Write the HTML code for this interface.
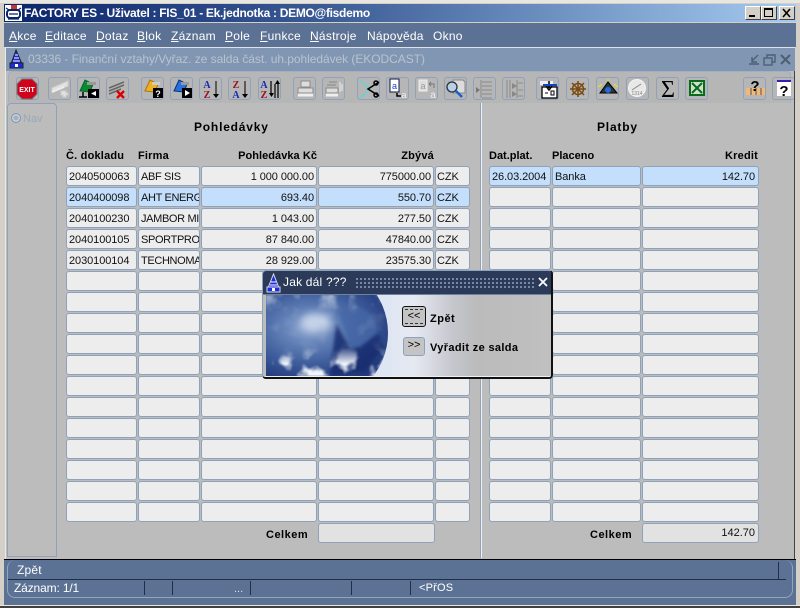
<!DOCTYPE html>
<html><head><meta charset="utf-8">
<style>
*{box-sizing:border-box}
html,body{margin:0;padding:0;background:#d4d0c8;overflow:hidden}
#r{position:relative;width:800px;height:608px;overflow:hidden;font-family:"Liberation Sans",sans-serif;font-size:11px;color:#000;background:#d4d0c8}
.a,#r>div{position:absolute}
.m{position:absolute;top:29px;color:#fff;font-size:12px;letter-spacing:.25px}
.m u{text-decoration:underline}
.g{display:grid;row-gap:1px;column-gap:1px;grid-auto-rows:20px}
.g i{display:block;height:20px;background:#ededed;border:1px solid #8ea3bb;border-radius:3px;font-style:normal;padding:3px 2px 0 2px;line-height:14px;font-size:11px;letter-spacing:-.08px;white-space:nowrap;overflow:hidden;color:#111}
.g i.h{background:#c3dffb}
.g i.t{text-align:right}
.g.p i{padding-right:3px}
.g.q i:nth-child(5n+2){letter-spacing:-.35px;padding-right:0}
.g.q i:nth-child(5n){padding-left:1px}
.f{position:absolute;background:#e2e2e2;border:1px solid #8ea3bb;border-radius:3px;height:20px;line-height:19px;text-align:right;padding-right:3px;color:#111}
.l{position:absolute;font-weight:bold;font-size:11px;line-height:13px;white-space:nowrap;color:#000;letter-spacing:.2px}
.b{position:absolute;top:77px;width:23px;height:23px;border:1px solid #8ea3bb;border-radius:3px}
</style></head><body>
<div id="r">

<!-- outer window -->
<div style="left:0;top:0;width:800px;height:3px;background:#e8e6e0"></div>
<div style="left:4px;top:4px;width:792px;height:18px;background:linear-gradient(90deg,#0a246a 0%,#3a5a94 40%,#a6caf0 100%)"></div>
<div style="left:24px;top:5px;color:#fff;font-weight:bold;font-size:12px;line-height:16px;white-space:nowrap;letter-spacing:-.3px">FACTORY ES - Uživatel : FIS_01 - Ek.jednotka : DEMO@fisdemo</div>
<svg class="a" style="left:5px;top:5px" width="18" height="17" viewBox="0 0 18 17"><rect width="17" height="16" fill="#fff"/><rect x="6" y="0" width="6" height="4" fill="#c33"/><rect x="2" y="5" width="13" height="8" rx="3" fill="none" stroke="#0a246a" stroke-width="2"/><path d="M4 9h9M3 14h11M1 3l3 2M16 3l-3 2" stroke="#0a246a" stroke-width="1.2"/></svg>
<div style="left:745px;top:6px;width:16px;height:14px;background:#d4d0c8;border:1px solid;border-color:#fff #404040 #404040 #fff"><div class="a" style="left:3px;top:8px;width:6px;height:2px;background:#000"></div></div>
<div style="left:761px;top:6px;width:16px;height:14px;background:#d4d0c8;border:1px solid;border-color:#fff #404040 #404040 #fff"><div class="a" style="left:2px;top:1px;width:9px;height:9px;border:1px solid #000;border-top-width:2px"></div></div>
<div style="left:779px;top:6px;width:16px;height:14px;background:#d4d0c8;border:1px solid;border-color:#fff #404040 #404040 #fff"><svg class="a" style="left:2px;top:1px" width="10" height="10"><path d="M1 1l7 8M8 1l-7 8" stroke="#000" stroke-width="1.6"/></svg></div>

<!-- menu -->
<div style="left:4px;top:23px;width:792px;height:24px;background:#5c7294;"></div>
<div style="left:4px;top:22px;width:792px;height:1px;background:#d4d0c8"></div>
<span class="m" style="left:9px"><u>A</u>kce</span>
<span class="m" style="left:45px"><u>E</u>ditace</span>
<span class="m" style="left:96px"><u>D</u>otaz</span>
<span class="m" style="left:137px"><u>B</u>lok</span>
<span class="m" style="left:171px"><u>Z</u>áznam</span>
<span class="m" style="left:225px"><u>P</u>ole</span>
<span class="m" style="left:260px"><u>F</u>unkce</span>
<span class="m" style="left:310px"><u>N</u>ástroje</span>
<span class="m" style="left:367px">Nápo<u>v</u>ěda</span>
<span class="m" style="left:433px">Okno</span>

<!-- MDI window -->
<div style="left:5px;top:47px;width:790px;height:513px;background:#bcbcbc;border-left:1px solid #e8e8e8"></div>
<div style="left:6px;top:47px;width:789px;height:1px;background:#dfe3e8"></div>
<div style="left:6px;top:48px;width:789px;height:23px;background:#8096b2"></div>
<div style="left:28px;top:51px;color:#b9c3cf;font-size:12px;line-height:16px;white-space:nowrap;letter-spacing:-.05px">03336 - Finanční vztahy/Vyřaz. ze salda část. uh.pohledávek (EKODCAST)</div>
<svg class="a" style="left:8px;top:49px" width="17" height="20" viewBox="0 0 17 20"><path d="M8 1L3 15h11z" fill="#1a2ee0" stroke="#222"/><rect x="2" y="14" width="13" height="5" fill="#1a2ee0" stroke="#222"/><path d="M6 9h5M5 12h7M7 6h3" stroke="#fff"/><rect x="7" y="15" width="3" height="3" fill="#fff"/></svg>
<svg class="a" style="left:745px;top:52px" width="50" height="15" viewBox="0 0 50 15" fill="none" stroke="#4e5f74" stroke-width="1.4"><path d="M4 12h10M13 3L7 9M7 5v5h5"/><rect x="19" y="6" width="8" height="7"/><path d="M22 6V3h8v7h-3" /><path d="M36 3l9 9M45 3l-9 9" stroke-width="2"/></svg>

<!-- toolbar -->
<div style="left:8px;top:71px;width:783px;height:32px;background:#b6b6b6;border-top:1px solid #9db0c5;border-left:1px solid #9db0c5;border-right:1px solid #9db0c5;border-radius:4px 4px 0 0"></div>
<div class="b" style="left:16px"></div><div class="b" style="left:48px"></div><div class="b" style="left:77px"></div><div class="b" style="left:106px"></div><div class="b" style="left:141px"></div><div class="b" style="left:170px"></div><div class="b" style="left:199px"></div><div class="b" style="left:228px"></div><div class="b" style="left:258px"></div><div class="b" style="left:293px"></div><div class="b" style="left:322px"></div><div class="b" style="left:357px"></div><div class="b" style="left:386px"></div><div class="b" style="left:415px"></div><div class="b" style="left:444px"></div><div class="b" style="left:473px"></div><div class="b" style="left:502px"></div><div class="b" style="left:536px"></div><div class="b" style="left:566px"></div><div class="b" style="left:596px"></div><div class="b" style="left:626px"></div><div class="b" style="left:656px"></div><div class="b" style="left:685px"></div><div class="b" style="left:743px"></div><div class="b" style="left:772px"></div>

<svg class="a" style="left:0;top:70px" width="800" height="36" viewBox="0 70 800 36" font-family="Liberation Sans,sans-serif" font-weight="bold">
<!-- exit -->
<path d="M22 79h10l5 5v10l-5 5H22l-5-5V84z" fill="#d0021b" stroke="#777"/>
<text x="27" y="92" text-anchor="middle" font-size="7" fill="#fff">EXIT</text>
<!-- grey insert -->
<path d="M52 88l16-7v5l-16 6zM61 91h5v2h2v2h-2v2h-3v-2h-2z" fill="#e2e2e2" stroke="#cfcfcf"/><path d="M52 92l12-5" stroke="#eee" stroke-width="2"/>
<!-- green -->
<path d="M80 91l5-11 8 4-3 8z" fill="#0a8a2a" stroke="#063"/><path d="M87 82h9v3h-9z" fill="#999"/><rect x="88" y="89" width="11" height="9" fill="#000"/><path d="M96 91l-5 2.500 5 2.500z" fill="#fff"/><path d="M79 97h8M83 92v5" stroke="#000" stroke-width="1.500"/>
<!-- del -->
<path d="M109 88l15-6M109 91l15-6M109 94l12-5" stroke="#666" stroke-width="1.500"/><path d="M117 91l7 7M124 91l-7 7" stroke="#d00" stroke-width="2.400"/>
<!-- yellow query -->
<path d="M145 91l5-11 8 4-3 8z" fill="#f0b020" stroke="#a70"/><path d="M152 82h8v3h-8z" fill="#ccc"/><rect x="153" y="88" width="10" height="10" fill="#000"/><text x="158" y="97" text-anchor="middle" font-size="9" fill="#fff">?</text>
<!-- blue -->
<path d="M174 91l5-11 8 4-3 8z" fill="#2a70e0" stroke="#037"/><path d="M181 82h8v3h-8z" fill="#999"/><rect x="182" y="88" width="10" height="10" fill="#000"/><path d="M185 90l5 3-5 3z" fill="#fff"/>
<!-- sort -->
<g font-family="Liberation Serif,serif">
<text x="207" y="88" text-anchor="middle" font-size="10" fill="#1a2ab0">A</text><text x="207" y="98" text-anchor="middle" font-size="10" fill="#9a1020">Z</text><path d="M216 81v14" stroke="#000"/><path d="M213 94h6l-3 4z" fill="#000"/>
<text x="236" y="88" text-anchor="middle" font-size="10" fill="#9a1020">Z</text><text x="236" y="98" text-anchor="middle" font-size="10" fill="#1a2ab0">A</text><path d="M245 81v14" stroke="#000"/><path d="M242 94h6l-3 4z" fill="#000"/>
<text x="264" y="88" text-anchor="middle" font-size="10" fill="#1a2ab0">A</text><text x="264" y="98" text-anchor="middle" font-size="10" fill="#9a1020">Z</text>
</g>
<path d="M271 81v14M275 84v14M278 84v14" stroke="#000" stroke-width="1.200"/><path d="M269 93h5l-2.500 4zM275 84h5l-2.500-4z" fill="#000"/>
<!-- print -->
<path d="M301 81h9v6h-9zM298 88h15v5h-15z" fill="#ddd" stroke="#8a8a8a"/><path d="M298 95h15" stroke="#eee" stroke-width="3"/>
<path d="M329 82h8M327 85h9M326 88h12v5h-12z" fill="#ddd" stroke="#888"/><path d="M326 95h12" stroke="#eee" stroke-width="3"/><path d="M340 82v10M342 84v7" stroke="#eee"/>
<!-- scissors -->
<path d="M360 80l10 9-10 9" fill="none" stroke="#7cc" stroke-width="2"/><path d="M379 82l-11 7 11 7" fill="none" stroke="#000" stroke-width="1.500"/><circle cx="376" cy="83" r="2" fill="none" stroke="#000" stroke-width="1.500"/><circle cx="376" cy="95" r="2" fill="none" stroke="#000" stroke-width="1.500"/>
<!-- copy -->
<rect x="390" y="79" width="9" height="13" fill="#fff" stroke="#114"/><text x="394.500" y="89" font-size="9" text-anchor="middle" fill="#14c" font-weight="normal">a</text><path d="M397 93v3h4" stroke="#000" stroke-width="1.500" fill="none"/><text x="404" y="98" font-size="9" text-anchor="middle" fill="#eee" font-weight="normal">a</text>
<!-- grey a<-a -->
<rect x="419" y="80" width="8" height="11" fill="#ddd" stroke="#eee"/><text x="423" y="89" font-size="9" text-anchor="middle" fill="#999" font-weight="normal">a</text><path d="M429 84h5v4M429 84l2-2M429 84l2 2" stroke="#777" fill="none"/><text x="433" y="98" font-size="10" text-anchor="middle" fill="#eee" font-weight="normal">a</text>
<!-- magnifier -->
<path d="M453 80h10l2 2v11h-12z" fill="#dcdcdc" stroke="#888"/><circle cx="452" cy="87" r="5" fill="#bcd0e4" stroke="#234" stroke-width="1.300"/><path d="M456 91l6 6" stroke="#1a5fd0" stroke-width="2.500"/>
<!-- lines -->
<path d="M481 80v18M482 82h10M482 86h10M482 90h10M482 94h10M482 98h10" stroke="#8a8a8a"/><path d="M476 87l4 3-4 3z" fill="#777"/>
<path d="M507 80v18M510 80v18M517 80v18M518 83h5M518 90h5M518 96h5" stroke="#8a8a8a"/><path d="M512 83l5 3-5 3zM512 91l5 3-5 3z" fill="#888"/>
<!-- form -->
<rect x="542" y="87" width="15" height="11" fill="#fff" stroke="#000" stroke-width="1.300"/><rect x="540" y="81" width="13" height="4" fill="#eee"/><path d="M549 81v7M546 86l3 4 3-4" stroke="#000" fill="none" stroke-width="1.500"/><path d="M543 85h14" stroke="#14c" stroke-width="2"/><path d="M545 93h3M551 91h3v4h-3z" stroke="#000" fill="none"/>
<!-- wheel -->
<g stroke="#7a4a10" stroke-width="1.500" fill="none"><circle cx="578" cy="89" r="5.500"/><path d="M570 89h16M578 81v16M572 83l12 12M584 83l-12 12"/></g>
<!-- triangle -->
<path d="M600 93l8-11 9 11z" fill="#333" stroke="#000"/><path d="M598 87l4-3M618 87l-4-3M608 79v2" stroke="#ee0"/><circle cx="608" cy="90" r="3" fill="#1a6fe0"/>
<!-- disk -->
<circle cx="637" cy="88" r="8.500" fill="#e8e8e8" stroke="#f4f4f4"/><path d="M632 90l9-6" stroke="#888"/><text x="637" y="95" font-size="5" text-anchor="middle" fill="#888" font-weight="normal">1314</text>
<!-- sigma -->
<text x="668" y="97" font-size="24" text-anchor="middle" fill="#000" font-family="Liberation Serif,serif" font-weight="normal">Σ</text>
<!-- excel -->
<rect x="690" y="81" width="14" height="14" fill="#cfe0cf" stroke="#0a6a1a" stroke-width="2"/><path d="M692 83l10 10M702 83l-10 10" stroke="#0a6a1a" stroke-width="2"/>
<!-- help -->
<path d="M746 88h19v7h-19z" fill="#f2b877"/><path d="M751 88v7M756 88v7M761 88v7" stroke="#555"/>
<text x="755" y="91" font-size="15" text-anchor="middle" fill="#000">?</text>
<rect x="777" y="81" width="14" height="15" fill="#fff"/><rect x="777" y="80" width="14" height="2" fill="#3a1ab0"/>
<text x="784" y="96" font-size="15" text-anchor="middle" fill="#000">?</text>
</svg>

<!-- nav -->
<div style="left:7px;top:103px;width:50px;height:454px;border:1px solid #8ea3bb;border-radius:4px 4px 0 0;background:#bcbcbc"></div>
<div style="left:11px;top:113px;width:10px;height:10px;border-radius:50%;background:#9fb0c4;border:1px solid #8296ae;box-shadow:inset 0 0 0 1.500px #c8d0d8"></div>
<div style="left:23px;top:113px;color:#9aa8b8;font-size:11px;line-height:13px">Nav</div>
<div style="left:481px;top:103px;width:1px;height:455px;background:#f0f0f0"></div>
<div style="left:480px;top:103px;width:1px;height:455px;background:#8ea3bb"></div>
<div style="left:794px;top:71px;width:1px;height:488px;background:#444"></div>

<!-- headings -->
<div class="l" style="left:194px;top:120px;font-size:12px;line-height:15px;letter-spacing:.8px">Pohledávky</div>
<div class="l" style="left:597px;top:120px;font-size:12px;line-height:15px;letter-spacing:.8px">Platby</div>
<div class="l" style="left:66px;top:150px">Č. dokladu</div>
<div class="l" style="left:138px;top:150px">Firma</div>
<div class="l" style="left:202px;top:150px;width:115px;text-align:right;letter-spacing:.05px">Pohledávka Kč</div>
<div class="l" style="left:319px;top:150px;width:115px;text-align:right">Zbývá</div>
<div class="l" style="left:489px;top:150px;letter-spacing:0">Dat.plat.</div>
<div class="l" style="left:552px;top:150px;letter-spacing:0">Placeno</div>
<div class="l" style="left:643px;top:150px;width:115px;text-align:right">Kredit</div>

<!-- left grid -->
<div class="g q" style="left:66px;top:166px;width:404px;grid-template-columns:71px 62px 116px 116px 35px">
<i>2040500063</i><i>ABF SIS</i><i class="t">1 000 000.00</i><i class="t">775000.00</i><i>CZK</i>
<i class="h">2040400098</i><i class="h">AHT ENERG</i><i class="h t">693.40</i><i class="h t">550.70</i><i class="h">CZK</i>
<i>2040100230</i><i>JAMBOR MI(</i><i class="t">1 043.00</i><i class="t">277.50</i><i>CZK</i>
<i>2040100105</i><i>SPORTPROF</i><i class="t">87 840.00</i><i class="t">47840.00</i><i>CZK</i>
<i>2030100104</i><i>TECHNOMAT</i><i class="t">28 929.00</i><i class="t">23575.30</i><i>CZK</i>
<i></i><i></i><i></i><i></i><i></i>
<i></i><i></i><i></i><i></i><i></i>
<i></i><i></i><i></i><i></i><i></i>
<i></i><i></i><i></i><i></i><i></i>
<i></i><i></i><i></i><i></i><i></i>
<i></i><i></i><i></i><i></i><i></i>
<i></i><i></i><i></i><i></i><i></i>
<i></i><i></i><i></i><i></i><i></i>
<i></i><i></i><i></i><i></i><i></i>
<i></i><i></i><i></i><i></i><i></i>
<i></i><i></i><i></i><i></i><i></i>
<i></i><i></i><i></i><i></i><i></i>
</div>

<!-- right grid -->
<div class="g p" style="left:489px;top:166px;width:270px;grid-template-columns:62px 89px 117px">
<i class="h">26.03.2004</i><i class="h">Banka</i><i class="h t">142.70</i>
<i></i><i></i><i></i>
<i></i><i></i><i></i>
<i></i><i></i><i></i>
<i></i><i></i><i></i>
<i></i><i></i><i></i>
<i></i><i></i><i></i>
<i></i><i></i><i></i>
<i></i><i></i><i></i>
<i></i><i></i><i></i>
<i></i><i></i><i></i>
<i></i><i></i><i></i>
<i></i><i></i><i></i>
<i></i><i></i><i></i>
<i></i><i></i><i></i>
<i></i><i></i><i></i>
<i></i><i></i><i></i>
</div>

<div class="l" style="left:266px;top:529px;letter-spacing:.5px">Celkem</div>
<div class="f" style="left:318px;top:523px;width:117px"></div>
<div class="l" style="left:590px;top:529px;letter-spacing:.5px">Celkem</div>
<div class="f" style="left:642px;top:523px;width:117px">142.70</div>

<!-- status -->
<div style="left:4px;top:559px;width:792px;height:1px;background:#000"></div>
<div style="left:4px;top:560px;width:792px;height:45px;background:#5c7294"></div>
<div style="left:7px;top:560px;width:306px;height:38px;border:1px solid #92a5bd;border-right:0;border-top:0;border-radius:8px 0 0 8px"></div>
<div style="left:312px;top:597px;width:472px;height:1px;background:#92a5bd"></div>
<div style="left:784px;top:560px;width:9px;height:38px;border:1px solid #92a5bd;border-left:0;border-top:0;border-radius:0 8px 8px 0"></div>
<div style="left:8px;top:579px;width:778px;height:1px;background:#1f2f4a"></div>
<div style="left:778px;top:562px;width:1px;height:17px;background:#1f2f4a"></div>
<div style="left:17px;top:563px;color:#fff;font-size:12px;line-height:15px;letter-spacing:.2px">Zpět</div>
<div style="left:14px;top:581px;color:#fff;font-size:12px;line-height:15px;letter-spacing:-.15px">Záznam: 1/1</div>
<div style="left:144px;top:581px;width:1px;height:14px;background:#1f2f4a"></div>
<div style="left:172px;top:581px;width:1px;height:14px;background:#1f2f4a"></div>
<div style="left:250px;top:581px;width:1px;height:14px;background:#1f2f4a"></div>
<div style="left:351px;top:581px;width:1px;height:14px;background:#1f2f4a"></div>
<div style="left:410px;top:581px;width:1px;height:14px;background:#1f2f4a"></div>
<div style="left:234px;top:583px;color:#d8dee6;font-size:11px;line-height:13px">...</div>
<div style="left:419px;top:582px;color:#fff;font-size:11px;line-height:13px;letter-spacing:.2px">&lt;PřOS</div>
<div style="left:0;top:605px;width:800px;height:1px;background:#e8e6e0"></div>
<div style="left:0;top:606px;width:800px;height:2px;background:#404040"></div>

<!-- dialog -->
<div style="left:262px;top:270px;width:291px;height:109px;background:#bdbdbd;border:1px solid #8ea3bb;border-right:2px solid #111;border-bottom:2px solid #111;border-radius:4px;overflow:hidden">
 <div class="a" style="left:0;top:0;width:289px;height:23px;background:#2a3a58"></div>
 <div class="a" style="left:92px;top:6px;width:180px;height:11px;background-image:radial-gradient(circle,#7d8ea8 1px,transparent 1.200px);background-size:4px 4px"></div>
 <div class="a" style="left:20px;top:3px;color:#fff;font-size:12px;line-height:16px;letter-spacing:.2px;white-space:nowrap">Jak dál ???</div>
 <svg class="a" style="left:3px;top:2px" width="15" height="20" viewBox="0 0 15 20"><path d="M7.500 1L2 15h11z" fill="#1a2ee0" stroke="#ddd"/><rect x="1" y="14" width="13" height="5" fill="#1a2ee0" stroke="#ddd"/><path d="M5 9h5M4 12h7" stroke="#fff"/><rect x="6" y="15" width="3" height="3" fill="#fff"/></svg>
 <svg class="a" style="left:274px;top:5px" width="12" height="12"><path d="M2 2l8 8M10 2l-8 8" stroke="#fff" stroke-width="1.800"/></svg>
 <div class="a" style="left:0;top:23px;width:289px;height:1px;background:#6f83a0"></div>
 <div class="a" style="left:3px;top:24px;width:285px;height:81px;background:linear-gradient(90deg,#dfe6f3 0,#dfe6f3 42%,#e6e9f2 52%,#c4c6cc 66%,#bbbbbb 74%,#c0c0c0 100%)"></div>
 <svg class="a" style="left:3px;top:24px" width="125" height="81" viewBox="0 0 125 81">
  <defs>
   <radialGradient id="gl" cx=".35" cy=".4" r=".7"><stop offset="0" stop-color="#9fb4d8"/><stop offset=".25" stop-color="#6a88bc"/><stop offset=".6" stop-color="#42619f"/><stop offset="1" stop-color="#223a7c"/></radialGradient>
   <filter id="bl" x="-40%" y="-40%" width="180%" height="180%"><feGaussianBlur stdDeviation="4"/></filter>
   <filter id="bs" x="-20%" y="-20%" width="140%" height="140%"><feGaussianBlur stdDeviation="1.500"/></filter>
   <filter id="cloud" x="0" y="0" width="100%" height="100%"><feTurbulence type="fractalNoise" baseFrequency=".055" numOctaves="3" seed="4"/><feColorMatrix type="matrix" values="0 0 0 0 .87 0 0 0 0 .91 0 0 0 0 .96 4 0 0 0 -1.900"/><feGaussianBlur stdDeviation=".6"/></filter>
   <clipPath id="cl"><circle cx="52" cy="38" r="70"/></clipPath>
   <linearGradient id="edge" x1="0" y1="0" x2="0" y2="1"><stop offset="0" stop-color="#fff" stop-opacity=".6"/><stop offset=".2" stop-color="#fff" stop-opacity=".1"/><stop offset=".65" stop-color="#fff" stop-opacity=".1"/><stop offset=".85" stop-color="#fff" stop-opacity="1"/></linearGradient>
   <mask id="mk"><rect width="125" height="81" fill="url(#edge)"/></mask>
  </defs>
  <rect width="125" height="81" fill="#dfe6f3"/>
  <g clip-path="url(#cl)">
   <rect width="125" height="81" fill="url(#gl)"/>
   <ellipse cx="50" cy="27" rx="15" ry="9" fill="#d4dff0" opacity=".8" filter="url(#bl)"/>
   <path d="M72 14l18-4 16 10 6 20-18 14-8-2-8-20z" fill="#4566a6" opacity=".8" filter="url(#bs)"/>
   <path d="M70 28l14 26 10-2 18-14 6 14-18 24-36 6z" fill="#182c6c" opacity=".8" filter="url(#bs)"/>
   <rect width="125" height="81" filter="url(#cloud)" mask="url(#mk)"/>
  </g>
 </svg>
 <div class="a" style="left:139px;top:35px;width:24px;height:21px;background:#c4c4c4;border:1px solid #111;border-radius:3px"><div class="a" style="left:2px;top:2px;width:18px;height:15px;border-top:1px dashed #333;border-bottom:1px dashed #333;text-align:center;font-size:11px;line-height:12px">&lt;&lt;</div></div>
 <div class="l" style="left:167px;top:42px;letter-spacing:.5px">Zpět</div>
 <div class="a" style="left:140px;top:66px;width:22px;height:19px;background:#c4c4c4;border:1px solid #8ea3bb;border-radius:3px;text-align:center;font-size:11px;line-height:15px">&gt;&gt;</div>
 <div class="l" style="left:167px;top:71px;letter-spacing:.35px">Vyřadit ze salda</div>
 <div class="a" style="left:0;top:105px;width:289px;height:1px;background:#f0f0f0"></div>
</div>

</div>
</body></html>
